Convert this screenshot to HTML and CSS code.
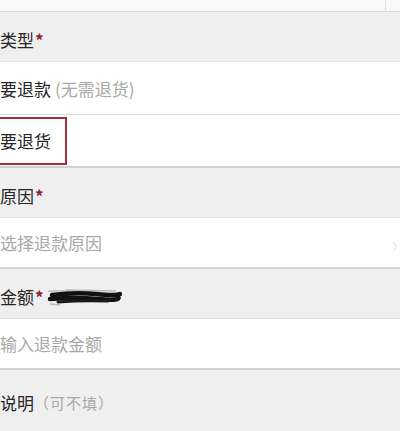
FILE: index.html
```html
<!DOCTYPE html>
<html lang="zh-CN">
<head>
  <meta charset="UTF-8" />
  <title>申请退款</title>
  <link rel="stylesheet" href="styles.css">
</head>
<body>
  <div class="modulo">
    <!-- riga sopra, tagliata -->
    <div class="riga-top">
      <span class="divisore"></span>
    </div>

    <div class="titolo">类型<span class="stella">*</span></div>
    <div class="opzione">要退款 <span class="nota">(无需退货)</span></div>
    <div class="opzione scura">
      <span class="selezionato">要退货</span>
    </div>

    <div class="titolo">原因<span class="stella">*</span></div>
    <div class="campo">
      <span class="segnaposto">选择退款原因</span>
      <span class="freccia">›</span>
    </div>

    <div class="titolo">金额<span class="stella">*</span>
      <svg class="scarabocchio" width="76" height="22" viewBox="0 0 76 22">
        <path d="M2 4 L30 4 M4 17 L14 18 M20 3 L70 4" stroke="#bbb" stroke-width="1.5" fill="none"/>
        <path d="M6 8 Q30 5 50 7 T74 7" stroke="#111" stroke-width="4.5" fill="none" stroke-linecap="round"/>
        <path d="M4 12 Q28 10 52 12 T72 10" stroke="#111" stroke-width="4.5" fill="none" stroke-linecap="round"/>
        <path d="M12 15 Q36 13 62 14" stroke="#1a1a1a" stroke-width="3" fill="none" stroke-linecap="round"/>
      </svg>
    </div>
    <div class="campo">
      <span class="segnaposto">输入退款金额</span>
    </div>

    <div class="titolo ultimo">说明<span class="facoltativo">（可不填）</span></div>
  </div>
</body>
</html>
```
FILE: styles.css
```css
:root {
  --grigio: #efefef;
  --bordo: #e2e2e2;
  --testo: #262626;
  --chiaro: #a8a8a8;
  --rosso: #8a2434;
}

* {
  margin: 0;
  padding: 0;
  box-sizing: border-box;
}

body {
  font-family: "Noto Sans CJK SC", "Noto Sans", sans-serif;
  background: var(--grigio);
  color: var(--testo);
  width: 400px;
  height: 431px;
  overflow: hidden;
}

.riga-top {
  height: 12px;
  background: #fafafa;
  border-bottom: 1px solid #dadada;
  position: relative;
}

.divisore {
  position: absolute;
  left: 385px;
  top: 0;
  width: 1px;
  height: 11px;
  background: #e0e0e0;
}

.titolo {
  height: 50px;
  display: flex;
  align-items: center;
  font-size: 17px;
  background: var(--grigio);
  border-bottom: 1px solid var(--bordo);
  padding-top: 6px;
}

.stella {
  color: var(--rosso);
  font-size: 17px;
  font-weight: bold;
  margin-left: 1px;
}

.opzione {
  height: 53px;
  display: flex;
  align-items: center;
  font-size: 17px;
  background: white;
  border-bottom: 1px solid #dcdcdc;
}

.opzione.scura {
  border-bottom: 2px solid #d0d0d0;
}

.nota {
  color: var(--chiaro);
  margin-left: 4px;
}

.selezionato {
  display: flex;
  align-items: center;
  width: 69px;
  height: 48px;
  margin-left: -2px;
  padding-left: 2px;
  border: 2px solid #a4303f;
  border-left: none;
}

.campo {
  height: 51px;
  display: flex;
  align-items: center;
  justify-content: space-between;
  font-size: 17px;
  background: white;
  border-bottom: 2px solid #d4d4d4;
}

.segnaposto {
  color: var(--chiaro);
}

.freccia {
  color: #e8e8e8;
  font-size: 22px;
  margin-right: 2px;
}

.scarabocchio {
  margin-left: 2px;
  margin-top: 2px;
}

.facoltativo {
  color: var(--chiaro);
  font-size: 15px;
  letter-spacing: 1px;
}

.ultimo {
  height: 58px;
  border-bottom: none;
}
```
